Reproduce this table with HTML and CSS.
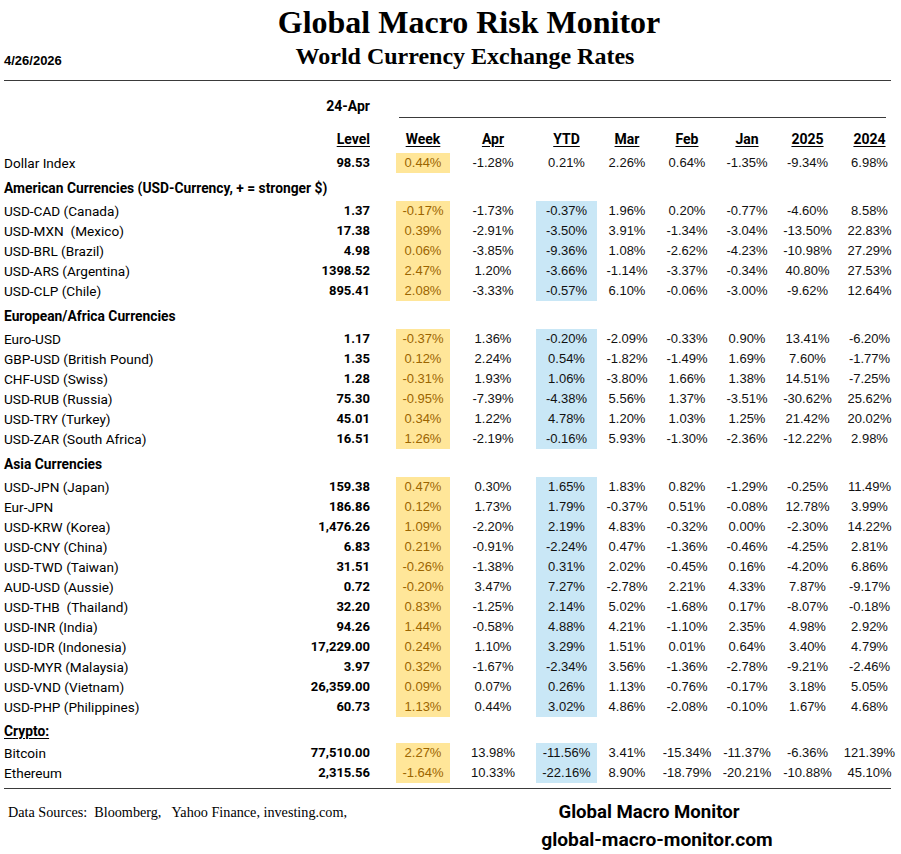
FILE: index.html
```html
<!DOCTYPE html>
<html lang="en">
<head>
<meta charset="utf-8">
<title>Global Macro Risk Monitor - World Currency Exchange Rates</title>
<link rel="stylesheet" href="styles.css">
</head>
<body>
<header class="masthead">
  <div class="mast-row">
    <h1 class="title">Global Macro Risk Monitor</h1>
  </div>
  <div class="mast-row">
    <div class="date">4/26/2026</div>
    <h2 class="subtitle">World Currency Exchange Rates</h2>
  </div>
</header>
<div class="rule"></div>

<table class="fx">
  <colgroup>
    <col class="c-label"><col class="c-level"><col class="c-gap">
    <col class="c-week"><col class="c-apr"><col class="c-ytd"><col class="c-mar">
    <col class="c-feb"><col class="c-jan"><col class="c-y25"><col class="c-y24">
  </colgroup>
  <thead>
    <tr class="date-row">
      <td></td>
      <td class="asof">24-Apr</td>
      <td></td>
      <td colspan="8" class="period-rule-cell"><div class="period-rule"></div></td>
    </tr>
    <tr class="head-row">
      <td></td>
      <th class="lvl">Level</th>
      <td></td>
      <th>Week</th><th>Apr</th><th>YTD</th><th>Mar</th><th>Feb</th><th>Jan</th><th>2025</th><th>2024</th>
    </tr>
  </thead>
  <tbody>
    <tr class="row"><td class="name">Dollar Index</td><td class="lvl">98.53</td><td></td><td class="wk">0.44%</td><td>-1.28%</td><td>0.21%</td><td>2.26%</td><td>0.64%</td><td>-1.35%</td><td>-9.34%</td><td>6.98%</td></tr>

    <tr class="sec"><td colspan="11">American Currencies (USD-Currency, + = stronger $)</td></tr>
    <tr class="row"><td class="name">USD-CAD (Canada)</td><td class="lvl">1.37</td><td></td><td class="wk">-0.17%</td><td>-1.73%</td><td class="ytd">-0.37%</td><td>1.96%</td><td>0.20%</td><td>-0.77%</td><td>-4.60%</td><td>8.58%</td></tr>
    <tr class="row"><td class="name">USD-MXN  (Mexico)</td><td class="lvl">17.38</td><td></td><td class="wk">0.39%</td><td>-2.91%</td><td class="ytd">-3.50%</td><td>3.91%</td><td>-1.34%</td><td>-3.04%</td><td>-13.50%</td><td>22.83%</td></tr>
    <tr class="row"><td class="name">USD-BRL (Brazil)</td><td class="lvl">4.98</td><td></td><td class="wk">0.06%</td><td>-3.85%</td><td class="ytd">-9.36%</td><td>1.08%</td><td>-2.62%</td><td>-4.23%</td><td>-10.98%</td><td>27.29%</td></tr>
    <tr class="row"><td class="name">USD-ARS (Argentina)</td><td class="lvl">1398.52</td><td></td><td class="wk">2.47%</td><td>1.20%</td><td class="ytd">-3.66%</td><td>-1.14%</td><td>-3.37%</td><td>-0.34%</td><td>40.80%</td><td>27.53%</td></tr>
    <tr class="row"><td class="name">USD-CLP (Chile)</td><td class="lvl">895.41</td><td></td><td class="wk">2.08%</td><td>-3.33%</td><td class="ytd">-0.57%</td><td>6.10%</td><td>-0.06%</td><td>-3.00%</td><td>-9.62%</td><td>12.64%</td></tr>

    <tr class="sec"><td colspan="11">European/Africa Currencies</td></tr>
    <tr class="row"><td class="name">Euro-USD</td><td class="lvl">1.17</td><td></td><td class="wk">-0.37%</td><td>1.36%</td><td class="ytd">-0.20%</td><td>-2.09%</td><td>-0.33%</td><td>0.90%</td><td>13.41%</td><td>-6.20%</td></tr>
    <tr class="row"><td class="name">GBP-USD (British Pound)</td><td class="lvl">1.35</td><td></td><td class="wk">0.12%</td><td>2.24%</td><td class="ytd">0.54%</td><td>-1.82%</td><td>-1.49%</td><td>1.69%</td><td>7.60%</td><td>-1.77%</td></tr>
    <tr class="row"><td class="name">CHF-USD (Swiss)</td><td class="lvl">1.28</td><td></td><td class="wk">-0.31%</td><td>1.93%</td><td class="ytd">1.06%</td><td>-3.80%</td><td>1.66%</td><td>1.38%</td><td>14.51%</td><td>-7.25%</td></tr>
    <tr class="row"><td class="name">USD-RUB (Russia)</td><td class="lvl">75.30</td><td></td><td class="wk">-0.95%</td><td>-7.39%</td><td class="ytd">-4.38%</td><td>5.56%</td><td>1.37%</td><td>-3.51%</td><td>-30.62%</td><td>25.62%</td></tr>
    <tr class="row"><td class="name">USD-TRY (Turkey)</td><td class="lvl">45.01</td><td></td><td class="wk">0.34%</td><td>1.22%</td><td class="ytd">4.78%</td><td>1.20%</td><td>1.03%</td><td>1.25%</td><td>21.42%</td><td>20.02%</td></tr>
    <tr class="row"><td class="name">USD-ZAR (South Africa)</td><td class="lvl">16.51</td><td></td><td class="wk">1.26%</td><td>-2.19%</td><td class="ytd">-0.16%</td><td>5.93%</td><td>-1.30%</td><td>-2.36%</td><td>-12.22%</td><td>2.98%</td></tr>

    <tr class="sec"><td colspan="11">Asia Currencies</td></tr>
    <tr class="row"><td class="name">USD-JPN (Japan)</td><td class="lvl">159.38</td><td></td><td class="wk">0.47%</td><td>0.30%</td><td class="ytd">1.65%</td><td>1.83%</td><td>0.82%</td><td>-1.29%</td><td>-0.25%</td><td>11.49%</td></tr>
    <tr class="row"><td class="name">Eur-JPN</td><td class="lvl">186.86</td><td></td><td class="wk">0.12%</td><td>1.73%</td><td class="ytd">1.79%</td><td>-0.37%</td><td>0.51%</td><td>-0.08%</td><td>12.78%</td><td>3.99%</td></tr>
    <tr class="row"><td class="name">USD-KRW (Korea)</td><td class="lvl">1,476.26</td><td></td><td class="wk">1.09%</td><td>-2.20%</td><td class="ytd">2.19%</td><td>4.83%</td><td>-0.32%</td><td>0.00%</td><td>-2.30%</td><td>14.22%</td></tr>
    <tr class="row"><td class="name">USD-CNY (China)</td><td class="lvl">6.83</td><td></td><td class="wk">0.21%</td><td>-0.91%</td><td class="ytd">-2.24%</td><td>0.47%</td><td>-1.36%</td><td>-0.46%</td><td>-4.25%</td><td>2.81%</td></tr>
    <tr class="row"><td class="name">USD-TWD (Taiwan)</td><td class="lvl">31.51</td><td></td><td class="wk">-0.26%</td><td>-1.38%</td><td class="ytd">0.31%</td><td>2.02%</td><td>-0.45%</td><td>0.16%</td><td>-4.20%</td><td>6.86%</td></tr>
    <tr class="row"><td class="name">AUD-USD (Aussie)</td><td class="lvl">0.72</td><td></td><td class="wk">-0.20%</td><td>3.47%</td><td class="ytd">7.27%</td><td>-2.78%</td><td>2.21%</td><td>4.33%</td><td>7.87%</td><td>-9.17%</td></tr>
    <tr class="row"><td class="name">USD-THB  (Thailand)</td><td class="lvl">32.20</td><td></td><td class="wk">0.83%</td><td>-1.25%</td><td class="ytd">2.14%</td><td>5.02%</td><td>-1.68%</td><td>0.17%</td><td>-8.07%</td><td>-0.18%</td></tr>
    <tr class="row"><td class="name">USD-INR (India)</td><td class="lvl">94.26</td><td></td><td class="wk">1.44%</td><td>-0.58%</td><td class="ytd">4.88%</td><td>4.21%</td><td>-1.10%</td><td>2.35%</td><td>4.98%</td><td>2.92%</td></tr>
    <tr class="row"><td class="name">USD-IDR (Indonesia)</td><td class="lvl">17,229.00</td><td></td><td class="wk">0.24%</td><td>1.10%</td><td class="ytd">3.29%</td><td>1.51%</td><td>0.01%</td><td>0.64%</td><td>3.40%</td><td>4.79%</td></tr>
    <tr class="row"><td class="name">USD-MYR (Malaysia)</td><td class="lvl">3.97</td><td></td><td class="wk">0.32%</td><td>-1.67%</td><td class="ytd">-2.34%</td><td>3.56%</td><td>-1.36%</td><td>-2.78%</td><td>-9.21%</td><td>-2.46%</td></tr>
    <tr class="row"><td class="name">USD-VND (Vietnam)</td><td class="lvl">26,359.00</td><td></td><td class="wk">0.09%</td><td>0.07%</td><td class="ytd">0.26%</td><td>1.13%</td><td>-0.76%</td><td>-0.17%</td><td>3.18%</td><td>5.05%</td></tr>
    <tr class="row"><td class="name">USD-PHP (Philippines)</td><td class="lvl">60.73</td><td></td><td class="wk">1.13%</td><td>0.44%</td><td class="ytd">3.02%</td><td>4.86%</td><td>-2.08%</td><td>-0.10%</td><td>1.67%</td><td>4.68%</td></tr>

    <tr class="sec sec-crypto"><td colspan="11"><u>Crypto:</u></td></tr>
    <tr class="row"><td class="name">Bitcoin</td><td class="lvl">77,510.00</td><td></td><td class="wk">2.27%</td><td>13.98%</td><td class="ytd">-11.56%</td><td>3.41%</td><td>-15.34%</td><td>-11.37%</td><td>-6.36%</td><td>121.39%</td></tr>
    <tr class="row"><td class="name">Ethereum</td><td class="lvl">2,315.56</td><td></td><td class="wk">-1.64%</td><td>10.33%</td><td class="ytd">-22.16%</td><td>8.90%</td><td>-18.79%</td><td>-20.21%</td><td>-10.88%</td><td>45.10%</td></tr>
  </tbody>
</table>

<div class="rule rule-bottom"></div>

<footer class="foot">
  <div class="sources">Data Sources:  Bloomberg,   Yahoo Finance, investing.com,</div>
  <div class="brand">
    <div class="brand-line brand-name">Global Macro Monitor</div>
    <div class="brand-line brand-url">global-macro-monitor.com</div>
  </div>
</footer>
</body>
</html>
```

FILE: styles.css
```css
html, body {
  margin: 0;
  padding: 0;
  background: #ffffff;
  color: #000000;
}

body {
  width: 901px;
  font-family: Roboto, "Liberation Sans", sans-serif;
}

/* ---------- masthead ---------- */
.masthead {
  padding-top: 6px;
  display: flex;
  flex-direction: column;
  gap: 6px;
}

.mast-row {
  display: grid;
  grid-template-columns: 64px 1fr 35px;
  align-items: baseline;
}

.title {
  grid-column: 2;
  margin: 0;
  padding-left: 8px;
  text-align: center;
  font-family: "Liberation Serif", "Times New Roman", serif;
  font-weight: bold;
  font-size: 32px;
  line-height: 32px;
}

.subtitle {
  grid-column: 2;
  margin: 0;
  text-align: center;
  font-family: "Liberation Serif", "Times New Roman", serif;
  font-weight: bold;
  font-size: 24px;
  line-height: 24px;
}

.date {
  grid-column: 1;
  padding-left: 4px;
  position: relative;
  top: 1px;
  font-family: "Liberation Sans", Arial, sans-serif;
  font-weight: bold;
  font-size: 13px;
  white-space: nowrap;
}

.rule {
  margin: 12px 10px 0 4px;
  border-top: 1px solid #3a3a3a;
}

.rule-bottom {
  margin-top: 5px;
}

/* ---------- table ---------- */
.fx {
  width: 901px;
  table-layout: fixed;
  border-collapse: collapse;
  border-spacing: 0;
}

.fx td, .fx th {
  padding: 0;
  text-align: center;
  white-space: nowrap;
  overflow: visible;
}

.c-label { width: 300px; }
.c-level { width: 70px; }
.c-gap   { width: 26px; }
.c-week  { width: 54px; }
.c-apr   { width: 86px; }
.c-ytd   { width: 61px; }
.c-mar   { width: 60px; }
.c-feb   { width: 60px; }
.c-jan   { width: 60px; }
.c-y25   { width: 61px; }
.c-y24   { width: 63px; }

.date-row { height: 37px; }

.asof {
  vertical-align: top;
  padding-top: 17px !important;
  text-align: right !important;
  font-family: Roboto, sans-serif;
  font-weight: bold;
  font-size: 14px;
  line-height: 16px;
}

.period-rule-cell {
  vertical-align: bottom;
}

.period-rule {
  margin: 0 15px 0 3px;
  border-bottom: 1px solid #3a3a3a;
}

.head-row { height: 35px; }

.head-row th {
  vertical-align: bottom;
  padding-bottom: 6px;
  font-family: Roboto, sans-serif;
  font-weight: bold;
  font-size: 14px;
  line-height: 16px;
  text-decoration: underline;
  text-underline-offset: 2px;
}

.head-row th.lvl {
  text-align: right;
}

.row { height: 20px; }

.row td {
  font-family: "Liberation Sans", Arial, sans-serif;
  font-size: 13px;
  line-height: 20px;
  color: #111111;
  vertical-align: middle;
}

.row td.name {
  text-align: left;
  padding-left: 4px;
  white-space: pre;
  font-family: Roboto, sans-serif;
  font-size: 13.6px;
  color: #000000;
}

.row td.lvl {
  text-align: right;
  font-family: Roboto, sans-serif;
  font-weight: bold;
  font-size: 13px;
  color: #000000;
}

.row td.wk {
  background: #ffe699;
  color: #9c6500;
}

.row td.ytd {
  background: #c9e7f6;
}

.sec { height: 28px; }

.sec td {
  text-align: left;
  padding-left: 4px;
  padding-top: 2px;
  font-family: Roboto, sans-serif;
  font-weight: bold;
  font-size: 13.8px;
  line-height: 20px;
  vertical-align: middle;
}

.sec-crypto { height: 26px; }

.sec-crypto u {
  text-underline-offset: 2px;
}

/* ---------- footer ---------- */
.foot {
  padding-top: 9px;
  display: grid;
  grid-template-columns: 405px 1fr;
}

.sources {
  padding-left: 8px;
  font-family: "Liberation Serif", "Times New Roman", serif;
  font-size: 14.2px;
  line-height: 28px;
  white-space: pre;
}

.brand {
  display: flex;
  flex-direction: column;
  align-items: center;
}

.brand-line {
  font-family: Roboto, sans-serif;
  font-weight: bold;
  line-height: 28px;
}

.brand-name {
  font-size: 18.6px;
  margin-right: 8px;
}

.brand-url {
  font-size: 19.2px;
  margin-left: 8px;
}
```
